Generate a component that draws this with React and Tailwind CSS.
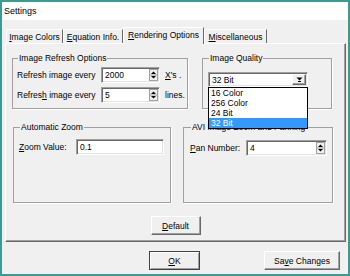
import React from 'react'

// Classic Win32 "Settings" dialog, Rendering Options tab

const raised =
  'border border-t-white border-l-white border-r-[#696969] border-b-[#696969] shadow-[inset_-1px_-1px_0_#a0a0a0]'
const sunken =
  'border border-t-[#a0a0a0] border-l-[#a0a0a0] border-r-white border-b-white shadow-[inset_1px_1px_0_#696969,inset_-1px_-1px_0_#e3e3e3]'

function U({ children }) {
  return <span className="underline underline-offset-[1px] decoration-[1px]">{children}</span>
}

function Spin() {
  return (
    <svg width="9" height="12" viewBox="0 0 9 12" className="shrink-0 mr-[1px]">
      <rect x="0.5" y="0.5" width="8" height="11" fill="#f0f0f0" stroke="#a0a0a0" />
      <line x1="0.5" y1="6" x2="8.5" y2="6" stroke="#a0a0a0" />
      <polygon points="2,5 7,5 4.5,2.5" fill="#000" />
      <polygon points="2,7 7,7 4.5,9.5" fill="#000" />
    </svg>
  )
}

function Field({ value, className, spin }) {
  return (
    <div className={`flex h-[16px] items-center bg-white ${sunken} ${className}`}>
      <span className="flex-1 pl-[3px]">{value}</span>
      {spin && <Spin />}
    </div>
  )
}

function Tab({ children, className, active }) {
  if (active)
    return (
      <div
        className={`relative z-10 -mb-px flex h-[17px] items-center justify-center pb-[2px] bg-[#f0f0f0] border-t border-l border-white border-r border-r-[#696969] ${className}`}
      >
        {children}
      </div>
    )
  return (
    <div
      className={`flex h-[14px] items-center justify-center border-t border-l border-white border-r border-r-[#696969] ${className}`}
    >
      {children}
    </div>
  )
}

function Group({ title, className, children }) {
  return (
    <fieldset className={`min-w-0 border border-[#a0a0a0] shadow-[1px_1px_0_#fff] ${className}`}>
      <legend className="ml-[1px] px-[1px] leading-[10px] whitespace-nowrap">{title}</legend>
      {children}
    </fieldset>
  )
}

export default function App() {
  return (
    <div className="w-[350px] h-[276px] flex flex-col border-2 border-[#3a9d93] bg-[#f0f0f0] text-[8.5px] leading-[10px] text-black font-['Liberation_Sans',Arial,sans-serif]">
      {/* title bar */}
      <div className="h-[18px] flex items-center bg-white pl-[2px] text-[9px]">Settings</div>

      <div className="flex flex-col pl-[3px] pr-[2px]">
        {/* tabs */}
        <div className="mt-[6px] flex h-[17px] items-end pl-[1px]">
          <Tab className="w-[57px]"><span><U>I</U>mage Colors</span></Tab>
          <Tab className="w-[60px]"><span><U>E</U>quation Info.</span></Tab>
          <Tab active className="w-[81px]"><span><U>R</U>endering Options</span></Tab>
          <Tab className="w-[63px]"><span><U>M</U>iscellaneous</span></Tab>
        </div>

        {/* tab panel */}
        <div className={`h-[199px] flex flex-col pt-[9px] ${raised}`}>
          <div className="flex">
            <Group title="Image Refresh Options" className="ml-[6px] w-[176px] h-[56px] pl-[4px] pt-[4px]">
              <div className="flex items-center">
                <span className="w-[84px]">Refresh image every</span>
                <Field value="2000" spin className="w-[59px]" />
                <span className="ml-[5px]"><U>X</U>'s .</span>
              </div>
              <div className="mt-[4px] flex items-center">
                <span className="w-[84px]">Refres<U>h</U> image every</span>
                <Field value="5" spin className="w-[59px]" />
                <span className="ml-[5px]">lines.</span>
              </div>
            </Group>

            <Group title="Image Quality" className="ml-[14px] w-[130px] h-[56px] pl-[5px] pt-[9px]">
              <div className={`relative z-20 flex h-[15px] w-[100px] items-center bg-white ${sunken}`}>
                <span className="flex-1 pl-[3px]">32 Bit</span>
                <div className={`mr-[1px] flex h-[11px] w-[14px] items-center justify-center bg-[#f0f0f0] ${raised}`}>
                  <svg width="7" height="5" viewBox="0 0 7 5">
                    <polygon points="0.5,0.5 6.5,0.5 3.5,3.5" fill="#000" />
                    <line x1="2" y1="4.5" x2="5" y2="4.5" stroke="#000" />
                  </svg>
                </div>
                <div className="absolute left-[-1px] top-full mt-px w-[100px] border border-black bg-white">
                  <div className="h-[10px] pl-[2px]">16 Color</div>
                  <div className="h-[10px] pl-[2px]">256 Color</div>
                  <div className="h-[10px] pl-[2px]">24 Bit</div>
                  <div className="h-[10px] pl-[2px] bg-[#3399ff] text-white">32 Bit</div>
                </div>
              </div>
            </Group>
          </div>

          <div className="mt-[13px] flex">
            <Group title="Automatic Zoom" className="ml-[7px] w-[158px] h-[81px] pl-[5px] pt-[7px]">
              <div className="flex items-center">
                <span className="w-[57px]"><U>Z</U>oom Value:</span>
                <Field value="0.1" className="w-[88px]" />
              </div>
            </Group>

            <Group title="AVI Image Zoom and Panning" className="ml-[12px] w-[150px] h-[81px] pl-[6px] pt-[8px]">
              <div className="flex items-center">
                <span className="w-[56px]"><U>P</U>an Number:</span>
                <Field value="4" spin className="w-[81px]" />
              </div>
            </Group>
          </div>

          <button className={`mt-[13px] self-center h-[19px] w-[50px] bg-[#f0f0f0] ${raised}`}>
            <U>D</U>efault
          </button>
        </div>

        {/* dialog buttons */}
        <div className="mt-[9px] flex justify-end gap-[64px] pr-[6px]">
          <button className="h-[19px] w-[51px] bg-[#f0f0f0] border border-[#404040] shadow-[inset_1px_1px_0_#fff,inset_-1px_-1px_0_#a0a0a0]">
            <U>O</U>K
          </button>
          <button className={`h-[19px] w-[76px] bg-[#f0f0f0] ${raised}`}>
            Sa<U>v</U>e Changes
          </button>
        </div>
      </div>
    </div>
  )
}
